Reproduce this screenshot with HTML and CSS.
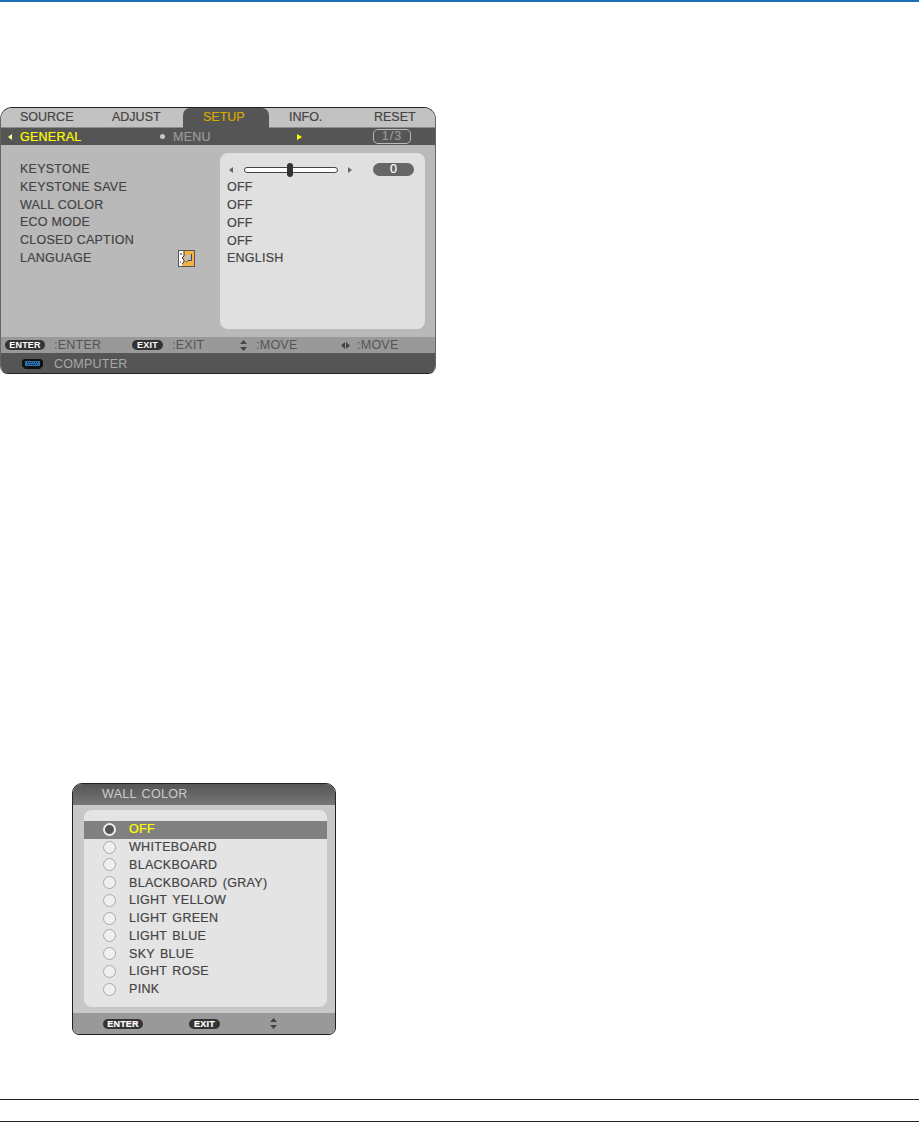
FILE: index.html
```html
<!DOCTYPE html>
<html lang="en">
<head>
    <meta charset="UTF-8">
    <title>Wall Color Setup</title>
    <link rel="stylesheet" href="styles.css">
</head>
<body>
    <div class="top-bar"></div>

    <div class="osd">
        <div class="tabs">
            <div class="tab tab-source">SOURCE</div>
            <div class="tab tab-adjust">ADJUST</div>
            <div class="tab tab-setup">SETUP</div>
            <div class="tab tab-info">INFO.</div>
            <div class="tab tab-reset">RESET</div>
        </div>
        <div class="subtabs">
            <span class="tri tri-left tri-pale"></span>
            <span class="sub-general">GENERAL</span>
            <span class="sub-dot"></span>
            <span class="sub-menu">MENU</span>
            <span class="tri tri-right tri-yellow"></span>
            <span class="page-pill">1/3</span>
        </div>
        <div class="osd-body">
            <div class="labels">
                <div class="row">KEYSTONE</div>
                <div class="row">KEYSTONE SAVE</div>
                <div class="row">WALL COLOR</div>
                <div class="row">ECO MODE</div>
                <div class="row">CLOSED CAPTION</div>
                <div class="row row-icon">LANGUAGE
                    <svg class="lang-icon" width="17" height="17" viewBox="0 0 17 17">
                        <rect x="0.5" y="0.5" width="16" height="16" fill="#f4b042" stroke="#555"/>
                        <path d="M1 1H6V6L4 8L6 10V12L4 14V16H1Z" fill="#fff"/>
                        <path d="M6 1V6L4 8L6 10V12L4 14" fill="none" stroke="#333"/>
                        <path d="M7 5H13V10H10L8 12H7Z" fill="#bdbdbd"/>
                        <path d="M13.5 4V10.5H10L8 12.5" fill="none" stroke="#444"/>
                        <path d="M2 4H4M2 12H3" stroke="#333"/>
                    </svg>
                </div>
            </div>
            <div class="values">
                <div class="row slider-row">
                    <span class="tri tri-left tri-gray"></span>
                    <span class="track"><span class="knob"></span></span>
                    <span class="tri tri-right tri-gray"></span>
                    <span class="value-pill">0</span>
                </div>
                <div class="row">OFF</div>
                <div class="row">OFF</div>
                <div class="row">OFF</div>
                <div class="row">OFF</div>
                <div class="row">ENGLISH</div>
            </div>
        </div>
        <div class="status">
            <span class="key key-enter">ENTER</span>
            <span class="hint hint-enter">:ENTER</span>
            <span class="key key-exit">EXIT</span>
            <span class="hint hint-exit">:EXIT</span>
            <svg class="arrows-ud" width="7" height="11" viewBox="0 0 7 11"><path d="M3.5 0L7 4H0ZM0 7H7L3.5 11Z" fill="#444"/></svg>
            <span class="hint hint-move1">:MOVE</span>
            <svg class="arrows-lr" width="9" height="7" viewBox="0 0 9 7"><path d="M0 3.5L4 0V7ZM5 0L9 3.5L5 7Z" fill="#444"/></svg>
            <span class="hint hint-move2">:MOVE</span>
        </div>
        <div class="source-bar">
            <svg class="monitor" width="21" height="10" viewBox="0 0 21 10">
                <path d="M2 0H19L21 2V7L18 10H3L0 7V2Z" fill="#111"/>
                <rect x="3" y="2" width="15" height="5" fill="#2a6fb0"/>
                <path d="M5 3.5H16M6 5.5H15" stroke="#123" stroke-dasharray="1 1"/>
            </svg>
            <span>COMPUTER</span>
        </div>
    </div>

    <div class="dialog">
        <div class="dialog-title">WALL COLOR</div>
        <div class="dialog-body">
            <div class="dialog-panel">
                <div class="option option-on"><span class="radio"></span>OFF</div>
                <div class="option"><span class="radio"></span>WHITEBOARD</div>
                <div class="option"><span class="radio"></span>BLACKBOARD</div>
                <div class="option"><span class="radio"></span>BLACKBOARD (GRAY)</div>
                <div class="option"><span class="radio"></span>LIGHT YELLOW</div>
                <div class="option"><span class="radio"></span>LIGHT GREEN</div>
                <div class="option"><span class="radio"></span>LIGHT BLUE</div>
                <div class="option"><span class="radio"></span>SKY BLUE</div>
                <div class="option"><span class="radio"></span>LIGHT ROSE</div>
                <div class="option"><span class="radio"></span>PINK</div>
            </div>
        </div>
        <div class="dialog-status">
            <span class="key key-d-enter">ENTER</span>
            <span class="key key-d-exit">EXIT</span>
            <svg class="arrows-d" width="7" height="11" viewBox="0 0 7 11"><path d="M3.5 0L7 4H0ZM0 7H7L3.5 11Z" fill="#444"/></svg>
        </div>
    </div>

    <div class="footer-rule"></div>
</body>
</html>
```

FILE: styles.css
```css
* {
    margin: 0;
    padding: 0;
    box-sizing: border-box;
}

body {
    font-family: "Liberation Sans", Arial, sans-serif;
    background: white;
    height: 1122px;
    overflow: hidden;
}

.top-bar {
    height: 2px;
    background: #1a6fb8;
}

/* main menu */
.osd {
    width: 436px;
    height: 267px;
    margin-top: 105px;
    border: 1px solid #222;
    border-left-color: #666;
    border-right-color: #666;
    border-radius: 12px 12px 8px 8px;
    overflow: hidden;
    background: #b9b9b9;
    font-size: 12.5px;
    letter-spacing: 0.25px;
    color: #444;
    -webkit-text-stroke: 0.2px;
}

.tabs {
    display: flex;
    height: 20px;
    background: #c2c2c2;
    border-bottom: 1px solid #8c8c8c;
    letter-spacing: 0;
}

.tab {
    line-height: 19px;
    padding-left: 20px;
}

.tab-source { padding-left: 19px; width: 91px; }
.tab-adjust { width: 91px; }
.tab-setup {
    width: 86px;
    height: 20px;
    background: #555;
    color: #d9a900;
    border-radius: 7px 7px 0 0;
}
.tab-info { width: 85px; }

.subtabs {
    display: flex;
    align-items: center;
    height: 17px;
    background: #555;
}

.tri {
    display: inline-block;
    flex: none;
    width: 0;
    height: 0;
    border-top: 3.5px solid transparent;
    border-bottom: 3.5px solid transparent;
}

.tri-left.tri-pale {
    border-right: 4px solid #ffffa0;
    margin-left: 7px;
}

.sub-general {
    color: #ffff00;
    margin-left: 8px;
    width: 140px;
}

.sub-dot {
    width: 5px;
    height: 5px;
    border-radius: 50%;
    background: #c8c8c8;
}

.sub-menu {
    color: #9a9a9a;
    margin-left: 8px;
    width: 124px;
}

.tri-right.tri-yellow {
    border-left: 5px solid #ffff00;
}

.page-pill {
    width: 38px;
    height: 15px;
    margin-left: 71px;
    border: 1px solid #bbb;
    border-radius: 5px;
    color: #999;
    letter-spacing: 1px;
    text-align: center;
    line-height: 13px;
}

.osd-body {
    display: flex;
    height: 192px;
    padding-top: 8px;
    justify-content: space-between;
}

.row {
    height: 17.75px;
    line-height: 17.75px;
    white-space: nowrap;
}

.labels {
    width: 219px;
    padding: 8px 0 0 19px;
}

.row-icon {
    display: flex;
    align-items: center;
    justify-content: space-between;
    padding-right: 25px;
}

.lang-icon {
    display: block;
}

.values {
    width: 205px;
    height: 176px;
    margin-right: 10px;
    padding-left: 7px;
    background: #e0e0e0;
    border-radius: 8px;
}

.slider-row {
    display: flex;
    align-items: center;
    margin: 8px 0 0.7px;
    padding-left: 2px;
}

.tri-left.tri-gray {
    border-right: 4px solid #666;
}

.tri-right.tri-gray {
    border-left: 4px solid #666;
}

.track {
    display: flex;
    align-items: center;
    width: 94px;
    height: 6px;
    margin: 0 10px 0 11px;
    padding-left: 42px;
    background: white;
    border: 1px solid #444;
    border-radius: 3px;
}

.knob {
    width: 6px;
    height: 14px;
    flex: none;
    background: #333;
    border-radius: 3px;
}

.value-pill {
    width: 41px;
    height: 13px;
    margin-left: 21px;
    background: #666;
    color: white;
    border-radius: 7px;
    text-align: center;
    line-height: 13px;
}

.status {
    display: flex;
    align-items: center;
    height: 16px;
    background: #999;
    color: #555;
    -webkit-text-stroke: 0;
}

.key {
    display: inline-block;
    height: 10px;
    background: #333;
    border-radius: 5px;
    color: white;
    font-size: 9px;
    font-weight: bold;
    letter-spacing: 0.2px;
    line-height: 10px;
    text-align: center;
}

.key-enter { width: 40px; margin-left: 4px; }
.hint-enter { margin-left: 9px; width: 78px; }
.key-exit { width: 31px; }
.hint-exit { margin-left: 9px; width: 68px; }
.arrows-ud { flex: none; }
.hint-move1 { margin-left: 9px; width: 45px; }
.arrows-lr { flex: none; margin-left: 40px; }
.hint-move2 { margin-left: 7px; }

.source-bar {
    display: flex;
    align-items: center;
    height: 20px;
    padding: 1px 0 0 21px;
    background: #555;
    color: #a8a8a8;
    -webkit-text-stroke: 0;
}

.source-bar span {
    margin-left: 11px;
}

/* wall color dialog */
.dialog {
    width: 264px;
    height: 252px;
    margin: 409px 0 0 72px;
    border: 1px solid #222;
    border-radius: 10px 10px 7px 7px;
    overflow: hidden;
    background: #c8c8c8;
    font-size: 12.5px;
    letter-spacing: 0.3px;
    word-spacing: 1.5px;
    color: #444;
    -webkit-text-stroke: 0.2px;
}

.dialog-title {
    height: 21px;
    padding-left: 29px;
    background: linear-gradient(#555, #777);
    color: #ccc;
    line-height: 21px;
    -webkit-text-stroke: 0;
}

.dialog-body {
    height: 208px;
    padding: 5px 8px 0 11px;
}

.dialog-panel {
    height: 197px;
    padding-top: 11px;
    background: #e4e4e4;
    border-radius: 8px;
}

.option {
    display: flex;
    align-items: center;
    height: 17.75px;
    padding: 0 0 1px 19px;
    white-space: nowrap;
}

.radio {
    width: 13px;
    height: 13px;
    margin-right: 13px;
    flex: none;
    background: #efefef;
    border: 1px solid #aaa;
    border-radius: 50%;
}

.option-on {
    background: #808080;
    color: #ffff00;
}

.option-on .radio {
    background: #555;
    border: 2px solid #eee;
}

.dialog-status {
    display: flex;
    align-items: center;
    height: 21px;
    background: #999;
}

.key-d-enter { width: 40px; margin-left: 30px; }
.key-d-exit { width: 31px; margin-left: 46px; }
.arrows-d { flex: none; margin-left: 50px; }

.footer-rule {
    height: 23px;
    margin-top: 64px;
    border-top: 1px solid #222;
    border-bottom: 1px solid #222;
}
```
